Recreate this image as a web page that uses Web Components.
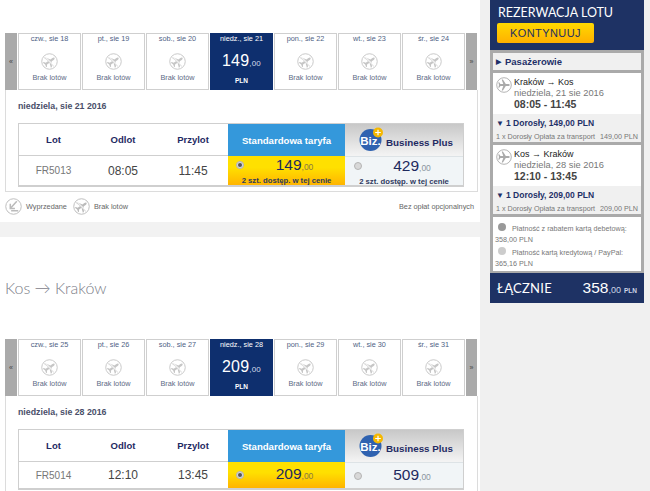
<!DOCTYPE html>
<html lang="pl">
<head>
<meta charset="utf-8">
<title>Rezerwacja lotu</title>
<style>
  html, body { margin: 0; height: 491px; overflow: hidden; background: #fff; }
  body { font-family: "Liberation Sans", Arial, sans-serif; display: flex; align-items: flex-start; }
  main { width: 480px; height: 491px; flex: none; padding-top: 33px; box-sizing: border-box; overflow: hidden; }
  h2 { font: 300 16px Lato, "Liberation Sans", sans-serif; color: #7d8089; margin: 40px 0 40px 5px; height: 22px; line-height: 22px; }
</style>
</head>
<body>
<main>
  <fare-day-strip prev-dates="czw., sie 18|pt., sie 19|sob., sie 20" active="niedz., sie 21" next-dates="pon., sie 22|wt., sie 23|śr., sie 24" price="149"></fare-day-strip>
  <flight-card title-date="niedziela, sie 21 2016" flight="FR5013" dep="08:05" arr="11:45" std="149" biz="429" seats="2 szt. dostęp. w tej cenie"></flight-card>
  <legend-row></legend-row>
  <h2>Kos → Kraków</h2>
  <fare-day-strip prev-dates="czw., sie 25|pt., sie 26|sob., sie 27" active="niedz., sie 28" next-dates="pon., sie 29|wt., sie 30|śr., sie 31" price="209"></fare-day-strip>
  <flight-card title-date="niedziela, sie 28 2016" flight="FR5014" dep="12:10" arr="13:45" std="209" biz="509" cut></flight-card>
</main>
<booking-summary></booking-summary>

<script>
const PLANE = "M15.5 9C15.5 8.2 14.5 7.8 13.6 7.8L11 7.8 7.8 2.8 6.4 2.8 8.2 7.8 5 7.8 3.6 6 2.6 6 3.4 9 2.6 12 3.6 12 5 10.2 8.2 10.2 6.4 15.2 7.8 15.2 11 10.2 13.6 10.2C14.5 10.2 15.5 9.8 15.5 9Z";

// ikona samolotu w kole; crossed = "brak lotów"
function planeIcon(size, color, crossed) {
  return `<svg width="${size}" height="${size}" viewBox="0 0 18 18" fill="none" style="display:block;flex:none">
    <circle cx="9" cy="9" r="8.2" stroke="${color}" stroke-width="1"/>
    <path d="${PLANE}" fill="${color}" transform="rotate(${crossed ? -35 : 0} 9 9)"/>
    ${crossed ? `<path d="M3.6 3.6 14.6 14.6" stroke="#fff" stroke-width="1.5"/><path d="M3.4 4 14 14.6" stroke="${color}" stroke-width=".7"/>` : ""}
  </svg>`;
}

// ikona "wyprzedane": strzalka w dol i kreska
function soldOutIcon(size, color) {
  return `<svg width="${size}" height="${size}" viewBox="0 0 18 18" fill="none" style="display:block;flex:none">
    <circle cx="9" cy="9" r="8.2" stroke="${color}" stroke-width="1"/>
    <path d="M12.5 3.5 6.5 10M5.6 6V11H10.5M6.5 13.6H14" stroke="${color}" stroke-width="1.6"/>
  </svg>`;
}

class FareDayStrip extends HTMLElement {
  constructor() {
    super();
    const shadow = this.attachShadow({ mode: "open" });
    const day = d => `<div class="day"><span>${d}</span><i>${planeIcon(17, "#c6c6c6", true)}</i><b>Brak lotów</b></div>`;
    const prev = this.getAttribute("prev-dates").split("|").map(day).join("");
    const next = this.getAttribute("next-dates").split("|").map(day).join("");
    shadow.innerHTML = `
      <style>
        :host { display: flex; margin-left: 5px; width: 472px; height: 57px; gap: 1px; font-family: "Liberation Sans", Arial, sans-serif; }
        .arrow { width: 12px; background: #aaa; color: #444; font-size: 7px; display: flex; align-items: center; justify-content: center; flex: none; }
        .arrow.next { width: 11px; }
        .days { display: flex; gap: 1px; flex: none; }
        .day { width: 63px; box-sizing: border-box; border: 1px solid #cfcfcf; background: #fff; display: flex; flex-direction: column; align-items: center; color: #4f5f85; }
        .day span { height: 9px; line-height: 9px; font-size: 7.3px; }
        .day i { margin-top: 10px; display: block; }
        .day b { font-weight: 400; margin-top: 3px; line-height: 9px; font-size: 7.3px; color: #5d6b85; }
        .active { background: #0e2f6e; border-color: #0e2f6e; color: #fff; }
        .active span { color: #fff; }
        .active strong { font-weight: 400; font-size: 16px; line-height: 18px; margin-top: 9px; letter-spacing: .2px; }
        .active strong small { font-size: 8px; color: #d5dcea; }
        .active em { font-style: normal; font-weight: 700; font-size: 6.5px; line-height: 8px; margin-top: 4px; }
      </style>
      <div class="arrow">«</div>
      <div class="days">
        ${prev}
        <div class="day active"><span>${this.getAttribute("active")}</span><strong>${this.getAttribute("price")}<small>,00</small></strong><em>PLN</em></div>
        ${next}
      </div>
      <div class="arrow next">»</div>
    `;
  }
}
customElements.define("fare-day-strip", FareDayStrip);

class FlightCard extends HTMLElement {
  constructor() {
    super();
    const shadow = this.attachShadow({ mode: "open" });
    const attr = n => this.getAttribute(n);
    const seats = attr("seats");
    const sub = seats ? `<div>${seats}</div>` : "";
    shadow.innerHTML = `
      <style>
        :host { display: block; width: 473px; margin-left: 5px; box-sizing: border-box; border: 1px solid #dcdcdc; border-top: 0; height: 102px; padding: 11px 12px 0; font-family: "Liberation Sans", Arial, sans-serif; }
        :host([cut]) { height: 95px; border-bottom: 0; }
        h3 { margin: 0; font-size: 8.8px; font-weight: 700; color: #4a4f6a; line-height: 11px; }
        .grid { margin-top: 11px; display: grid; grid-template-columns: 69px 70px 70px 117px 118px; grid-template-rows: 32px ${seats ? 29 : 26}px; border: 1px solid #cfcfcf; border-width: 1px 1px 2px 1px; width: 444px; }
        .h { display: flex; align-items: center; justify-content: center; font-size: 9.5px; font-weight: 700; color: #1f2a63; border-bottom: 1px solid #cfcfcf; }
        .std-h { background: #3498db; color: #fff; font-size: 9.6px; border-bottom: 0; }
        .biz-h { background: linear-gradient(#c8c8c8, #f4f4f4); border-bottom: 0; gap: 3px; font-size: 9.8px; box-sizing: border-box; }
        .biz-h span { margin-top: 4px; }
        .c { display: flex; align-items: center; justify-content: center; font-size: 12px; color: #444; }
        .fl { font-size: 10px; color: #777; }
        .fare { position: relative; text-align: center; color: #1e2a5e; display: flex; flex-direction: column; justify-content: ${seats ? "flex-start" : "center"}; }
        .fare.s { background: linear-gradient(#ffe000 40%, #ffb400); }
        .fare.b { background: #f1f5f7; border-top: 1px solid #dde3e6; box-sizing: border-box; }
        .fare p { margin: 0; font-size: 15.5px; line-height: 18px; padding-left: 16px; }
        .fare p small { font-size: 8.5px; color: #8a7a40; }
        .fare.b p small { color: #8a96a0; }
        .fare div { font-size: 7.7px; font-weight: 700; line-height: 9px; color: #2f3a5e; }
        .radio { position: absolute; left: 8px; top: ${seats ? 5 : 9}px; width: 6px; height: 6px; border-radius: 50%; background: #d8d8d8; border: 1px solid #b4b4b4; }
        .fare.b .radio { left: 9px; }
        .radio.on::after { content: ""; position: absolute; left: 1px; top: 1px; width: 4px; height: 4px; border-radius: 50%; background: #555; }
      </style>
      <h3>${attr("title-date")}</h3>
      <div class="grid">
        <div class="h">Lot</div><div class="h">Odlot</div><div class="h">Przylot</div>
        <div class="h std-h">Standardowa taryfa</div>
        <div class="h biz-h">
          <svg width="28" height="27" viewBox="0 0 28 27" style="flex:none"><circle cx="15.5" cy="13" r="11" fill="#2f62b0"/><text x="15.5" y="17.5" text-anchor="middle" font-size="11.5" font-weight="700" fill="#fff" font-family="Liberation Sans">Biz.</text><circle cx="23" cy="5.5" r="5" fill="#f5b800"/><path d="M23 2.7v5.6M20.2 5.5h5.6" stroke="#fff" stroke-width="1.2"/></svg>
          <span>Business Plus</span>
        </div>
        <div class="c fl">${attr("flight")}</div><div class="c">${attr("dep")}</div><div class="c">${attr("arr")}</div>
        <div class="fare s"><span class="radio on"></span><p>${attr("std")}<small>,00</small></p>${sub}</div>
        <div class="fare b"><span class="radio"></span><p>${attr("biz")}<small>,00</small></p>${sub}</div>
      </div>
    `;
  }
}
customElements.define("flight-card", FlightCard);

class LegendRow extends HTMLElement {
  constructor() {
    super();
    this.attachShadow({ mode: "open" }).innerHTML = `
      <style>
        :host { display: block; font: 7.3px "Liberation Sans", Arial, sans-serif; color: #666; }
        .row { display: flex; align-items: center; margin: 5px 6px 0 5px; height: 18px; }
        span { margin: 0 6px 0 4px; }
        .sp { flex: 1; }
        .band { margin-top: 7px; height: 15px; background: #f2f2f2; }
      </style>
      <div class="row">
        ${soldOutIcon(17, "#bbb")}<span>Wyprzedane</span>
        ${planeIcon(17, "#bbb", true)}<span>Brak lotów</span>
        <div class="sp"></div>Bez opłat opcjonalnych
      </div>
      <div class="band"></div>
    `;
  }
}
customElements.define("legend-row", LegendRow);

class BookingSummary extends HTMLElement {
  constructor() {
    super();
    const leg = (route, date, time, tot) => `
      <div class="leg">
        <div class="top">${planeIcon(16, "#aaa", false)}<div><div class="route">${route}</div><div class="date">${date}</div><div class="time">${time}</div></div></div>
        <div class="pax"><div class="l"><i>▼</i>1 Dorosły, ${tot} PLN</div><div class="m"><span>1 x Dorosły Opłata za transport</span><span>${tot} PLN</span></div></div>
      </div>`;
    this.attachShadow({ mode: "open" }).innerHTML = `
      <style>
        :host { display: block; width: 170px; height: 491px; padding-left: 10px; background: #f0f0f0; font-family: "Liberation Sans", Arial, sans-serif; color: #1f3068; box-sizing: border-box; }
        .wrap { width: 154px; }
        header { background: #1e3264; height: 50px; box-sizing: border-box; padding: 6px 7px 0 8px; color: #fff; font: 12.5px/13px Lato, "Liberation Sans", sans-serif; }
        header button { display: block; border: 0; margin: 4px 0 0 -1px; width: 97px; height: 20px; border-radius: 2px; background: linear-gradient(#ffd900, #ffb000); color: #1e2f60; font: 11px "Liberation Sans", Arial, sans-serif; letter-spacing: .4px; }
        .body { background: #aaa; padding: 3px 3px 2px; display: flex; flex-direction: column; gap: 3px; }
        .pass { background: #f0f0f0; height: 17px; line-height: 17px; padding-left: 3px; font-size: 9.5px; font-weight: 700; }
        .pass i { display: inline-block; width: 9px; font-style: normal; font-size: 6.5px; vertical-align: 1px; }
        .leg { background: #fff; }
        .top { display: flex; gap: 2px; padding: 4px 3px 0; height: 41px; box-sizing: border-box; }
        .route { font-size: 9px; color: #222; line-height: 11px; }
        .date { font-size: 9.3px; color: #777; line-height: 10px; }
        .time { font-size: 10.5px; font-weight: 700; color: #444; line-height: 13px; }
        .pax { background: #f0f0f0; padding: 4px 3px 0; height: 28px; box-sizing: border-box; }
        .l { font-size: 8.5px; font-weight: 700; line-height: 11px; }
        .l i { display: inline-block; width: 10px; font-style: normal; font-size: 8px; }
        .m { display: flex; justify-content: space-between; margin-top: 3px; font-size: 7.2px; color: #777; line-height: 9px; }
        .pay { background: #fff; height: 54px; box-sizing: border-box; padding: 6px 2px 0; font-size: 7.2px; color: #777; line-height: 11px; }
        .pay p { margin: 0; }
        .pay p + p { margin-top: 2px; }
        .pay u { display: inline-block; text-decoration: none; width: 8px; height: 8px; border-radius: 50%; background: #ccc; margin: 0 6px 0 3px; vertical-align: 0; }
        .pay u.on { background: #999; }
        footer { background: #1e3264; color: #fff; height: 30px; display: flex; align-items: center; justify-content: space-between; padding: 0 7px; font: 13px Lato, "Liberation Sans", sans-serif; letter-spacing: .3px; box-sizing: border-box; }
        footer span { font-family: "Liberation Sans", Arial, sans-serif; letter-spacing: 0; }
        footer strong { font-size: 15.5px; font-weight: 400; }
        footer small { font-size: 9px; color: #cdd5e5; }
        footer em { font-size: 6.5px; font-style: normal; font-weight: 700; color: #cdd5e5; margin-left: 3px; }
      </style>
      <div class="wrap">
        <header>REZERWACJA LOTU<button>KONTYNUUJ</button></header>
        <div class="body">
          <div class="pass"><i>▶</i>Pasażerowie</div>
          ${leg("Kraków → Kos", "niedziela, 21 sie 2016", "08:05 - 11:45", "149,00")}
          ${leg("Kos → Kraków", "niedziela, 28 sie 2016", "12:10 - 13:45", "209,00")}
          <div class="pay"><p><u class="on"></u>Płatność z rabatem kartą debetową:<br>358,00 PLN</p><p><u></u>Płatność kartą kredytową / PayPal:<br>365,16 PLN</p></div>
        </div>
        <footer>ŁĄCZNIE<span><strong>358</strong><small>,00</small><em>PLN</em></span></footer>
      </div>
    `;
  }
}
customElements.define("booking-summary", BookingSummary);
</script>
</body>
</html>
